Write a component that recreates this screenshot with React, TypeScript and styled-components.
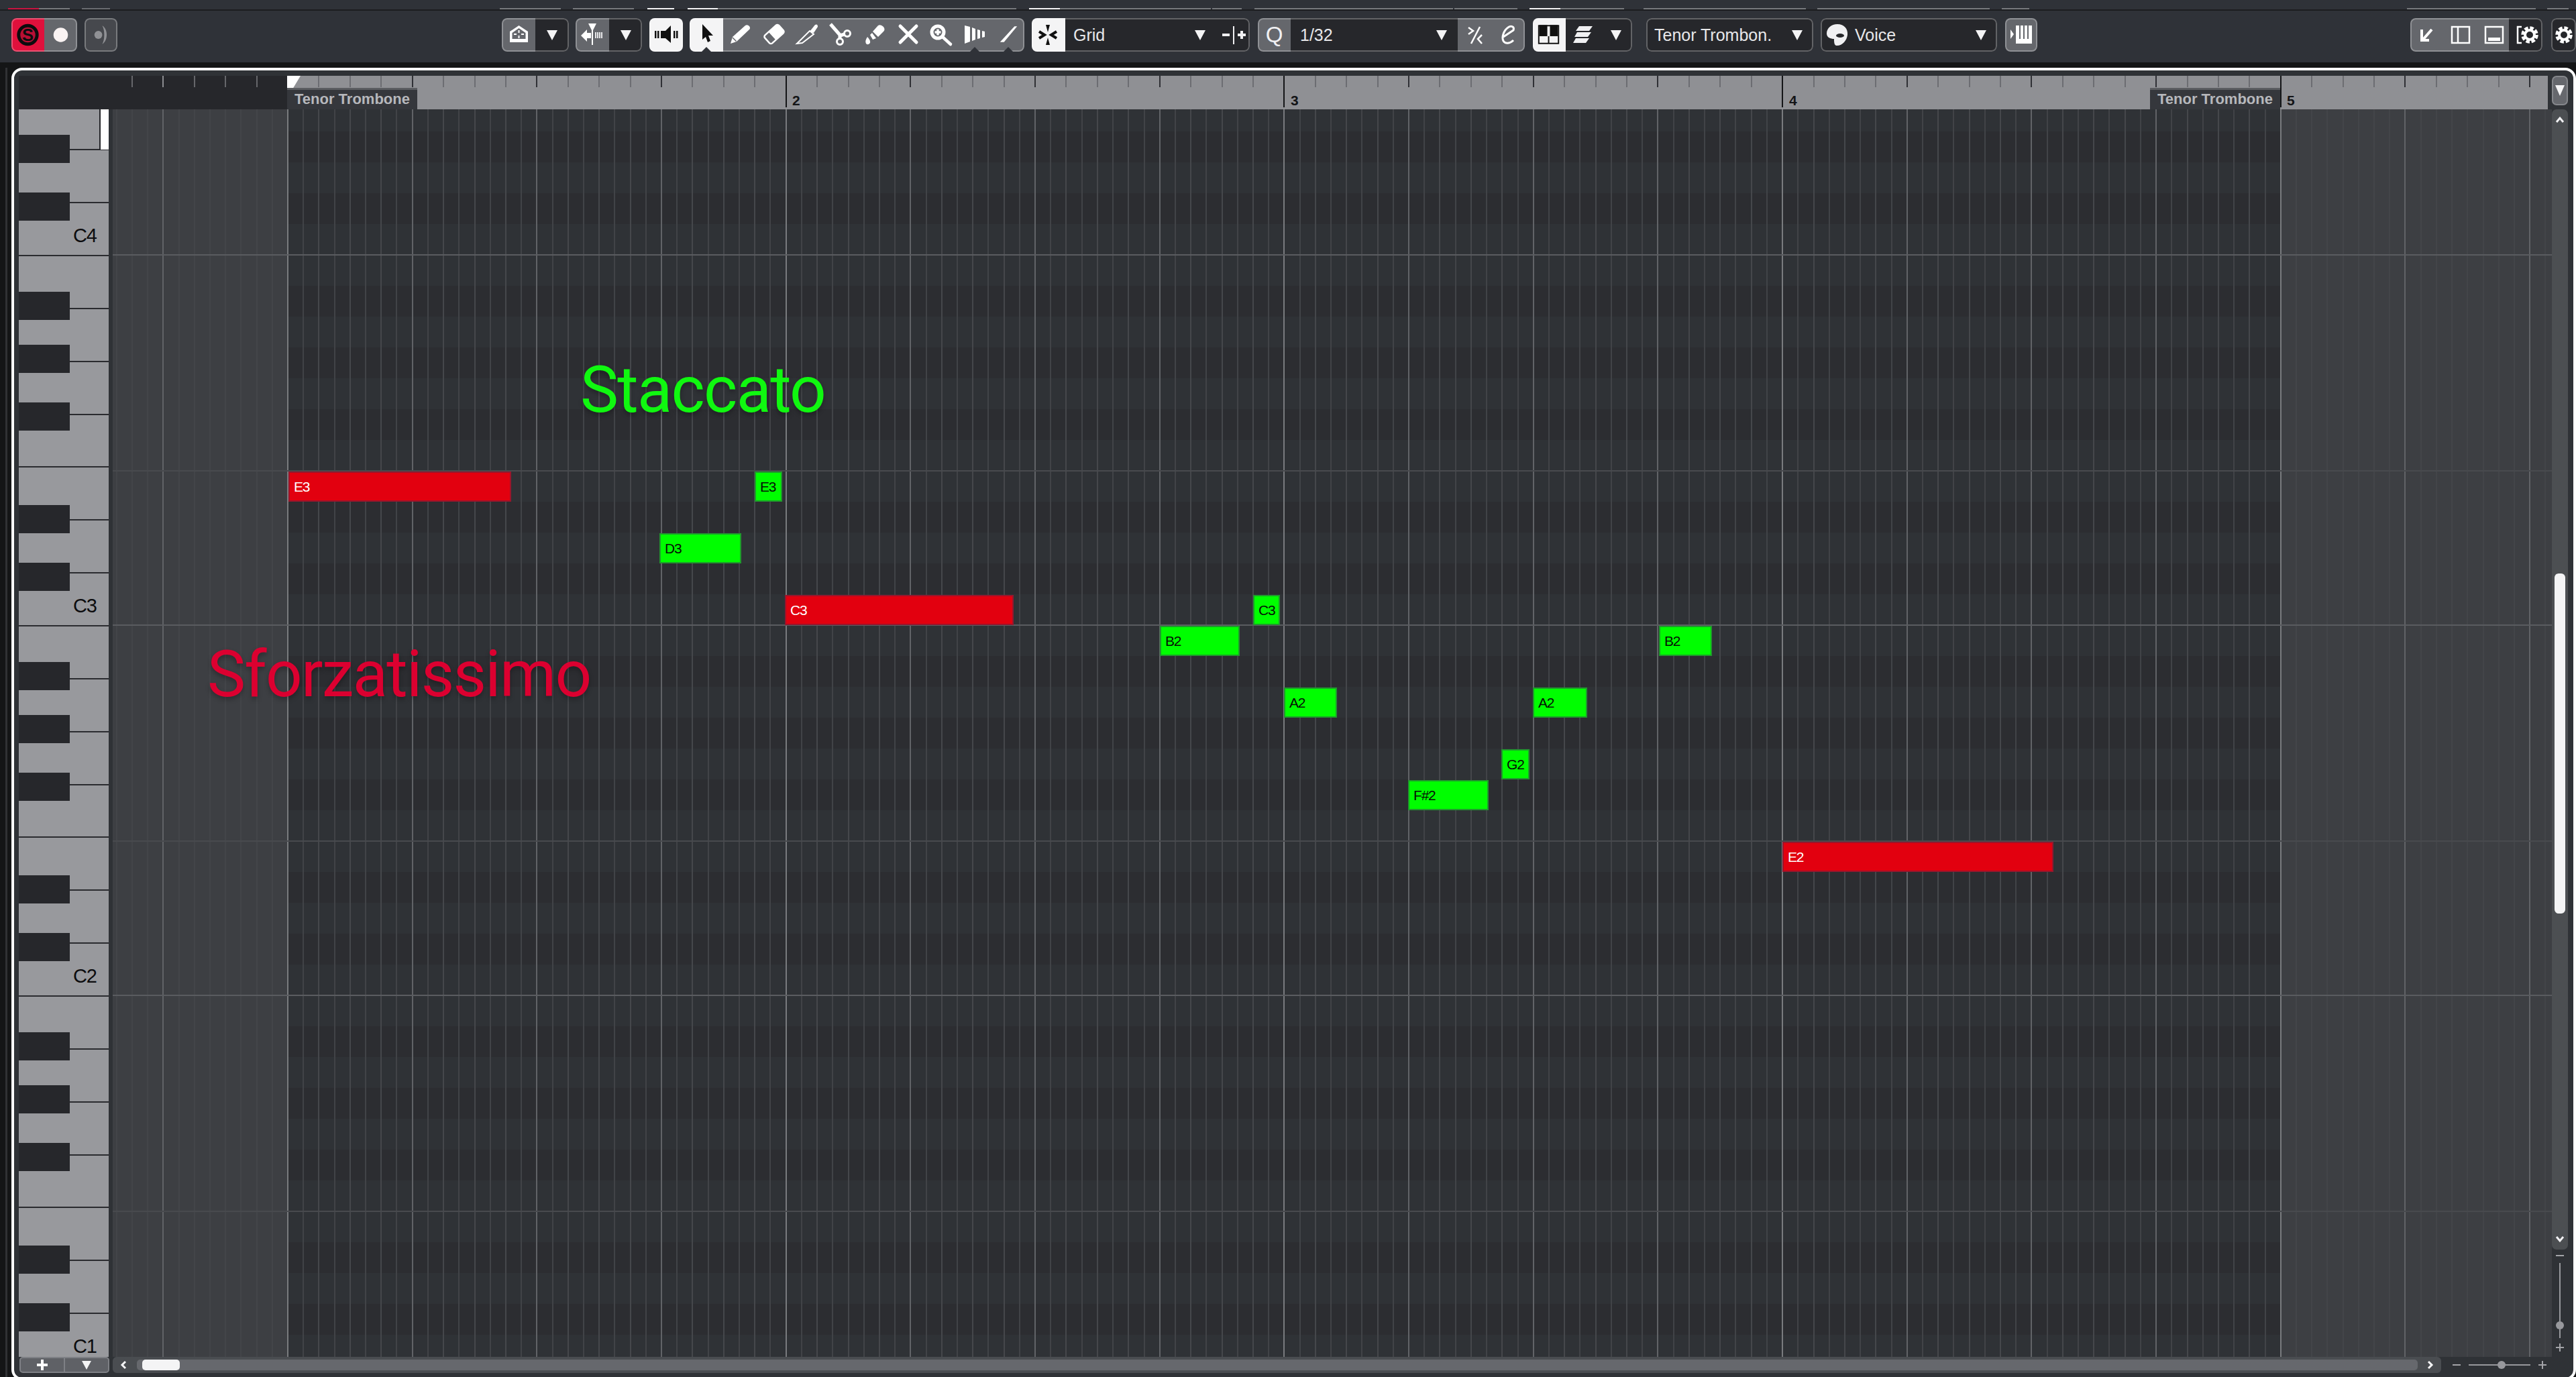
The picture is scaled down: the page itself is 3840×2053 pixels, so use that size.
import React from 'react';
import styled, { createGlobalStyle } from 'styled-components';

const BAR = 742.7;
const ORIGIN = 428;
const LIVE_END = 3399;
const GRID_X = 168;
const GRID_Y = 163;
const GRID_W = 3636;
const GRID_H = 1860;
const ROW = 46;

const pitchTop = (p: number) => 1990 - ROW * p;
const isBlack = (p: number) => [1, 3, 6, 8, 10].includes(p % 12);

const notes = [
  { name: 'E3', p: 28, from: 430, to: 762, accent: true },
  { name: 'E3', p: 28, from: 1125, to: 1166 },
  { name: 'D3', p: 26, from: 983, to: 1105 },
  { name: 'C3', p: 24, from: 1170, to: 1511, accent: true },
  { name: 'B2', p: 23, from: 1729, to: 1848 },
  { name: 'C3', p: 24, from: 1868, to: 1908 },
  { name: 'A2', p: 21, from: 1914, to: 1993 },
  { name: 'F#2', p: 18, from: 2099, to: 2219 },
  { name: 'G2', p: 19, from: 2238, to: 2280 },
  { name: 'A2', p: 21, from: 2285, to: 2366 },
  { name: 'B2', p: 23, from: 2473, to: 2552 },
  { name: 'E2', p: 16, from: 2657, to: 3061, accent: true },
];

const edgeSegments = [
  [12, 58, '#c81440'], [58, 104, '#77797d'], [122, 164, '#6a6c70'], [745, 836, '#77797d'], [854, 945, '#77797d'],
  [965, 1005, '#f4f4f5'], [1025, 1070, '#f4f4f5'], [1070, 1515, '#77797d'], [1534, 1580, '#f4f4f5'], [1580, 1805, '#77797d'],
  [1807, 1851, '#77797d'], [1870, 2166, '#77797d'], [2168, 2262, '#77797d'], [2280, 2326, '#f4f4f5'], [2326, 2421, '#77797d'],
  [2450, 2692, '#77797d'], [2709, 2966, '#77797d'], [2984, 3025, '#77797d'], [3588, 3780, '#77797d'], [3797, 3829, '#77797d'],
];

const GlobalStyle = createGlobalStyle`
  html, body {
    margin: 0;
    background: #141516;
    overflow: hidden;
  }
  * { box-sizing: border-box; }
`;

const Page = styled.div`
  position: relative;
  width: 3840px;
  height: 2053px;
  overflow: hidden;
  background: #141516;
  font-family: 'Liberation Sans', Arial, sans-serif;
  display: flex;
  flex-direction: column;
`;

const TopEdge = styled.div`
  flex: none;
  height: 16px;
  background: #2f3238;
  border-bottom: 2px solid #1c1d20;
  display: flex;
  align-items: flex-end;
`;

const EdgeSeg = styled.i<{ $ml: number; $w: number; $c: string }>`
  display: block;
  height: 2px;
  margin-left: ${p => p.$ml}px;
  width: ${p => p.$w}px;
  background: ${p => p.$c};
`;

const Toolbar = styled.div`
  height: 77px;
  flex: none;
  padding-top: 11px;
  background: #2f3238;
  display: flex;
  align-items: flex-start;
`;

const Group = styled.div<{ $ml: number }>`
  position: relative;
  flex: none;
  display: flex;
  height: 50px;
  margin-left: ${p => p.$ml}px;
  border-radius: 8px;
  overflow: hidden;

  &::after {
    content: '';
    position: absolute;
    inset: 0;
    border: 2px solid rgba(255, 255, 255, 0.28);
    border-radius: 8px;
    pointer-events: none;
  }
`;

const tones: Record<string, string> = {
  grey: '#65676c',
  dark: '#26272b',
  white: '#f4f4f5',
  red: '#e0103c',
  mute: '#46484d',
};

const Cell = styled.div<{ $w: number; $tone: string }>`
  position: relative;
  flex: none;
  width: ${p => p.$w}px;
  height: 50px;
  background: ${p => tones[p.$tone]};
  display: flex;
  align-items: center;
  justify-content: center;

  & + &[data-split] {
    border-left: 2px solid #6a6c70;
  }
`;

const Notch = styled.span`
  position: absolute;
  left: 50%;
  bottom: 0;
  margin-left: -7px;
  width: 0;
  height: 0;
  border-left: 7px solid transparent;
  border-right: 7px solid transparent;
  border-bottom: 7px solid #2f3238;
  z-index: 2;
`;

const SelectCell = styled(Cell)<{ $pl: number }>`
  justify-content: flex-start;
  gap: 10px;
  padding: 0 16px 0 ${p => p.$pl}px;
  color: #e8e8ea;
  font-size: 25px;
`;

const SelectText = styled.span`
  flex: 1;
  white-space: nowrap;
`;

const Caret = styled.span`
  flex: none;
  width: 0;
  height: 0;
  border-left: 8px solid transparent;
  border-right: 8px solid transparent;
  border-top: 15px solid #f4f4f5;
`;

const QLetter = styled.span`
  color: #f0f0f2;
  font-size: 33px;
`;

const Frame = styled.div`
  position: relative;
  flex: none;
  margin-top: 8px;
  margin-left: 17px;
  width: 3823px;
  height: 1957px;
  border: 4px solid #fff;
  border-radius: 16px;
  background: #2f3236;
  padding: 8px 0 0 7px;
  display: grid;
  grid-template-columns: 140px ${GRID_W}px 32px;
  grid-template-rows: 50px ${GRID_H}px 24px;
  align-content: start;

  &::before {
    content: '';
    position: absolute;
    left: -13px;
    top: -4px;
    bottom: -4px;
    width: 3px;
    background: #303134;
  }
`;

const Ruler = styled.div`
  position: relative;
  grid-column: 1 / span 2;
  width: 3770px;
  height: 50px;
  display: flex;
  overflow: hidden;
`;

const RulerDead = styled.div`
  width: ${ORIGIN - 28}px;
  background: #26272b;
`;

const RulerLive = styled.div`
  flex: 1;
  background: #8f9094;
`;

const RulerTicks = styled.svg`
  position: absolute;
  left: 0;
  top: 0;
`;

const BarNumber = styled.span<{ $x: number }>`
  position: absolute;
  left: ${p => p.$x}px;
  top: 25px;
  font-size: 21px;
  line-height: 24px;
  font-weight: 700;
  color: #141517;
`;

const Marker = styled.div<{ $x: number }>`
  position: absolute;
  left: ${p => p.$x}px;
  top: 18px;
  width: 194px;
  height: 32px;
  background: #35373c;
  border-top: 3px solid #5b5d61;
  color: #b7b8bc;
  font-size: 22px;
  font-weight: 700;
  line-height: 27px;
  padding-left: 11px;
  white-space: nowrap;
`;

const CornerButton = styled.div`
  width: 24px;
  height: 44px;
  background: #66686d;
  border: 2px solid #85878b;
  border-radius: 7px;
  display: flex;
  align-items: center;
  justify-content: center;

  ${Caret} {
    border-left-width: 7px;
    border-right-width: 7px;
    border-top-width: 16px;
  }
`;

const KeyColumn = styled.div`
  width: 134px;
  height: ${GRID_H}px;
  position: relative;
  overflow: hidden;
  background: #98999d;
`;

const KeyStack = styled.div`
  margin-top: -335px;
`;

const Octave = styled.div`
  position: relative;
  height: 552px;
  display: flex;
  flex-direction: column;
`;

const WhiteKey = styled.div`
  flex: 1;
  border-top: 2px solid #2a2b2f;
  background: #98999d;
`;

const BlackKey = styled.div<{ $bottom: number }>`
  position: absolute;
  left: 0;
  bottom: ${p => p.$bottom}px;
  width: 76px;
  height: 42px;
  background: #26272b;
`;

const KeyLabel = styled.span`
  position: absolute;
  right: 18px;
  bottom: 14px;
  color: #0c0c0e;
  font-size: 29px;
  line-height: 1;
  letter-spacing: -1px;
`;

const ActiveKey = styled.div`
  position: absolute;
  right: 0;
  top: 0;
  width: 14px;
  height: 60px;
  background: #fff;
  border-left: 2px solid #26272b;
`;

const Roll = styled.div`
  position: relative;
  width: ${GRID_W}px;
  height: ${GRID_H}px;
  overflow: hidden;
  background: #3d3f43;
`;

const RollLines = styled.svg`
  display: block;
`;

const Note = styled.div<{ $x: number; $y: number; $w: number; $accent?: boolean }>`
  position: absolute;
  left: ${p => p.$x}px;
  top: ${p => p.$y}px;
  width: ${p => p.$w}px;
  height: 45px;
  padding-left: 6px;
  background: ${p => (p.$accent ? '#e2000f' : '#00fe00')};
  border: 2px solid ${p => (p.$accent ? '#98162c' : '#1f9a2c')};
  color: ${p => (p.$accent ? '#fff' : '#061006')};
  font-size: 21px;
  line-height: 41px;
  letter-spacing: -1.2px;
  white-space: nowrap;
  overflow: hidden;
`;

const Caption = styled.span<{ $x: number; $y: number; $c: string }>`
  position: absolute;
  left: ${p => p.$x}px;
  top: ${p => p.$y}px;
  color: ${p => p.$c};
  font-family: Roboto, 'Liberation Sans', sans-serif;
  font-weight: 400;
  font-size: 96px;
  line-height: 1;
  letter-spacing: -1.7px;
  text-shadow: 0 4px 7px rgba(0, 0, 0, 0.28);
  white-space: nowrap;
`;

const SideColumn = styled.div`
  width: 24px;
  display: flex;
  flex-direction: column;
  align-items: center;
`;

const VTrack = styled.div`
  position: relative;
  width: 24px;
  height: 1700px;
  background: #4c4f52;
  border-radius: 7px;
`;

const VThumb = styled.div`
  position: absolute;
  left: 4px;
  right: 4px;
  top: 692px;
  height: 507px;
  background: #f4f4f5;
  border-radius: 6px;
`;

const VChevron = styled.svg<{ $top?: number; $bottom?: number }>`
  position: absolute;
  left: 5px;
  ${p => (p.$top !== undefined ? `top: ${p.$top}px;` : `bottom: ${p.$bottom}px;`)}
`;

const VSlider = styled.div`
  flex: 1;
  display: flex;
  flex-direction: column;
  align-items: center;
  padding-top: 8px;
`;

const Minus = styled.i`
  display: block;
  width: 12px;
  height: 2px;
  background: #a3a4a8;
  flex: none;
`;

const PlusMark = styled.svg`
  flex: none;
  display: block;
`;

const VRail = styled.div`
  position: relative;
  width: 2px;
  height: 112px;
  margin: 10px 0 8px;
  background: #97989c;
`;

const VKnob = styled.i`
  position: absolute;
  left: -5px;
  bottom: 13px;
  width: 12px;
  height: 12px;
  border-radius: 50%;
  background: #98999d;
`;

const KeyButtons = styled.div`
  width: 134px;
  height: 24px;
  margin-left: 1px;
  display: flex;
  border: 2px solid #7e8085;
  border-radius: 5px;
  background: #5f6166;
  overflow: hidden;
`;

const KeyButton = styled.div`
  flex: 1;
  display: flex;
  align-items: center;
  justify-content: center;

  & + & {
    border-left: 2px solid #7e8085;
  }

  ${Caret} {
    border-left-width: 7px;
    border-right-width: 7px;
    border-top-width: 13px;
  }
`;

const BottomBar = styled.div`
  display: flex;
  height: 24px;
`;

const HScroll = styled.div`
  width: 3471px;
  height: 24px;
  background: #4a4d51;
  border-radius: 6px;
  display: flex;
  align-items: center;
  justify-content: space-between;
  padding: 0 10px;
`;

const HTrack = styled.div`
  width: 3400px;
  height: 16px;
  background: #66686d;
  border-radius: 5px;
  padding-left: 8px;
`;

const HThumb = styled.div`
  width: 56px;
  height: 16px;
  border-radius: 5px;
  background: #f4f4f5;
`;

const HZoom = styled.div`
  flex: 1;
  display: flex;
  align-items: center;
  padding: 0 4px 0 17px;
  gap: 12px;
`;

const HRail = styled.div`
  position: relative;
  width: 92px;
  height: 2px;
  background: #97989c;
  flex: none;
`;

const HKnob = styled.i`
  position: absolute;
  left: 43px;
  top: -5px;
  width: 12px;
  height: 12px;
  border-radius: 50%;
  background: #98999d;
`;

const Icon: React.FC<{ size?: number; w?: number; children: React.ReactNode }> = ({ size = 50, w, children }) => (
  <svg width={w ?? size} height={size} viewBox={`0 0 ${w ?? size} ${size}`}>
    {children}
  </svg>
);

const Gear: React.FC<{ cx: number; cy: number; fill: string; bg: string }> = ({ cx, cy, fill, bg }) => (
  <g>
    <circle cx={cx} cy={cy} r={10.5} fill="none" stroke={fill} strokeWidth={4.5} strokeDasharray="5.5 2.75" />
    <circle cx={cx} cy={cy} r={7} fill={bg} stroke={fill} strokeWidth={4} />
  </g>
);

const Chevron: React.FC<{ dir: 'left' | 'right' }> = ({ dir }) => (
  <svg width="12" height="14" viewBox="0 0 12 14">
    <path d={dir === 'left' ? 'M9 2 L4 7 L9 12' : 'M3 2 L8 7 L3 12'} fill="none" stroke="#f4f4f5" strokeWidth="3" />
  </svg>
);

const Plus: React.FC = () => (
  <PlusMark width="12" height="12" viewBox="0 0 12 12">
    <path d="M0 6 H12 M6 0 V12" stroke="#a3a4a8" strokeWidth="2" />
  </PlusMark>
);

const RollGrid: React.FC = () => {
  const step = BAR / 32;
  const lines: React.ReactNode[] = [];
  for (let i = -11; i < 162; i++) {
    const x = ORIGIN + i * step - GRID_X;
    if (x < 0 || x > GRID_W) continue;
    const live = x + GRID_X >= ORIGIN - 1 && x + GRID_X < LIVE_END + 1;
    let color = live ? '#414347' : '#434549';
    if (i % 2 === 0 && live) color = '#45474b';
    if (i % 8 === 0) color = '#616367';
    if (i % 32 === 0 && live) color = '#797b7e';
    lines.push(<rect key={i} x={Math.round(x)} y={0} width={2} height={GRID_H} fill={color} />);
  }
  const rows: React.ReactNode[] = [];
  const rules: React.ReactNode[] = [];
  for (let p = -1; p < 41; p++) {
    const y = pitchTop(p) - GRID_Y;
    rows.push(
      <rect key={p} x={ORIGIN - GRID_X} y={y} width={LIVE_END - ORIGIN} height={ROW} fill={isBlack(p) ? '#2c2d31' : '#2f3236'} />,
    );
    if (p % 12 === 0) rules.push(<rect key={`c${p}`} x={0} y={y + ROW - 1} width={GRID_W} height={2} fill="#5a5c60" />);
    if (p % 12 === 4) rules.push(<rect key={`f${p}`} x={0} y={y - 1} width={GRID_W} height={2} fill="#484a4e" />);
  }
  return (
    <RollLines width={GRID_W} height={GRID_H} shapeRendering="crispEdges">
      {rows}
      {lines}
      {rules}
    </RollLines>
  );
};

const RulerMarks: React.FC = () => {
  const step = BAR / 16;
  const marks: React.ReactNode[] = [];
  for (let i = -5; i < 76; i++) {
    const x = Math.round(ORIGIN + i * step - 28);
    if (x > 3770) continue;
    const dead = i < 0;
    const beat = i % 4 === 0;
    const bar = i % 16 === 0 && i >= 0 && x < LIVE_END - 27;
    let color = beat ? '#2f3035' : '#6c6d72';
    if (dead) color = beat ? '#8b8c90' : '#66676b';
    if (bar) color = '#141517';
    marks.push(<rect key={i} x={x} y={0} width={2} height={bar ? 47 : 17} fill={color} />);
  }
  return (
    <RulerTicks width={3770} height={50} shapeRendering="crispEdges">
      {marks}
      <polygon points="400,0 420,0 402,30 402,47 400,47" fill="#fff" shapeRendering="auto" />
    </RulerTicks>
  );
};

const Keyboard: React.FC = () => (
  <KeyColumn>
    <KeyStack>
      {['C4', 'C3', 'C2', 'C1'].map(label => (
        <Octave key={label}>
          {[0, 1, 2, 3, 4, 5, 6].map(k => (
            <WhiteKey key={k} />
          ))}
          {[455, 376, 290, 137, 51].map(b => (
            <BlackKey key={b} $bottom={b} />
          ))}
          <KeyLabel>{label}</KeyLabel>
        </Octave>
      ))}
    </KeyStack>
    <ActiveKey />
  </KeyColumn>
);

const TopToolbar: React.FC = () => (
  <Toolbar>
    <Group $ml={17}>
      <Cell $w={49} $tone="red">
        <Icon>
          <circle cx={25} cy={25} r={14} fill="#b80f34" stroke="#0c0c0e" strokeWidth={5} />
          <text x={25} y={34} textAnchor="middle" fontFamily="Liberation Sans" fontWeight="700" fontSize="26" fill="#0c0c0e">
            S
          </text>
        </Icon>
      </Cell>
      <Cell $w={49} $tone="grey">
        <Icon>
          <circle cx={25} cy={25} r={11} fill="#faf3f3" />
        </Icon>
      </Cell>
    </Group>
    <Group $ml={11}>
      <Cell $w={49} $tone="mute">
        <Icon>
          <circle cx={21} cy={25} r={6} fill="#909195" />
          <path d="M27 11 C36 16 36 34 27 39 C31 33 31 17 27 11Z" fill="#909195" />
        </Icon>
      </Cell>
    </Group>
    <Group $ml={573}>
      <Cell $w={50} $tone="grey">
        <Icon>
          <path d="M25.5 11 L39 20 V36 H12 V20Z" fill="#fff" />
          <path d="M25.5 15 L35.5 22 V31 H15.5 V22Z" fill="#65676c" />
          <path d="M24.5 18 h2 v4 h-2z M24.5 26 h2 v4 h-2z M18 23 h4 v2 h-4z M29 23 h4 v2 h-4z" fill="#fff" />
        </Icon>
      </Cell>
      <Cell $w={50} $tone="dark">
        <Caret />
      </Cell>
    </Group>
    <Group $ml={10}>
      <Cell $w={50} $tone="grey">
        <Icon>
          <path d="M24 8 h2 V40 h-2z M19 8 H31 L25 20Z M8 26 L17 17 V22 H23 V30 H17 V35Z" fill="#fff" />
          <path d="M29 21 h2 v9 h-2z M32 21 h2 v9 h-2z M35 21 h2 v9 h-2z M38 21 h2 v9 h-2z" fill="#e6e6e8" />
        </Icon>
      </Cell>
      <Cell $w={49} $tone="dark">
        <Caret />
      </Cell>
    </Group>
    <Group $ml={11}>
      <Cell $w={50} $tone="white">
        <Icon>
          <path d="M8 19 h2.5 v11 h-2.5z M12 19 h2.5 v11 h-2.5z M36 19 h2.5 v11 h-2.5z M40 19 h2.5 v11 h-2.5z" fill="#111" />
          <path d="M17 19 H24 L32 11 V37 L24 30 H17Z" fill="#111" />
        </Icon>
      </Cell>
    </Group>
    <Group $ml={10}>
      <Cell $w={50} $tone="white">
        <Icon>
          <path d="M19 9 L35 26 L28 26 L31 34 L27 36 L24 28 L19 32Z" fill="#111" />
        </Icon>
        <Notch />
      </Cell>
      <Cell $w={50} $tone="grey">
        <Icon>
          <path d="M11 38 L14 28 L33 11 Q36 9 39 12 Q41 15 39 17 L20 35Z" fill="#fff" />
          <path d="M14 29 L19.5 34.5" stroke="#65676c" strokeWidth="1.5" />
        </Icon>
      </Cell>
      <Cell $w={50} $tone="grey">
        <Icon>
          <g transform="rotate(-42 26 24)">
            <rect x={12} y={16} width={28} height={16} rx={3} fill="none" stroke="#fff" strokeWidth={2.5} />
            <path d="M22 16 H37 Q40 16 40 19 V29 Q40 32 37 32 H22Z" fill="#fff" />
          </g>
        </Icon>
      </Cell>
      <Cell $w={50} $tone="grey">
        <Icon>
          <path d="M29 20 L37 10 Q41 8 41 13 L35 22Z" fill="#fff" />
          <path d="M29 19 L35 24 L18 37 L10 38Z" fill="none" stroke="#fff" strokeWidth={2} />
        </Icon>
      </Cell>
      <Cell $w={50} $tone="grey">
        <Icon>
          <path d="M10 9 L24 25 V30 M24 26 L31 24" fill="none" stroke="#fff" strokeWidth={5} />
          <circle cx={24} cy={35} r={4.5} fill="none" stroke="#fff" strokeWidth={3} />
          <circle cx={35} cy={23} r={4.5} fill="none" stroke="#fff" strokeWidth={3} />
        </Icon>
      </Cell>
      <Cell $w={50} $tone="grey">
        <Icon>
          <path d="M23 20 L31 11 Q35 9 39 13 Q42 17 39 20 L31 28Z" fill="#fff" />
          <path d="M19 25 L22 22 L28 30 L23 32Z" fill="#fff" />
          <path d="M15 28 Q11 34 13 38 Q16 41 19 37 Q20 33 15 28Z" fill="#fff" />
        </Icon>
      </Cell>
      <Cell $w={50} $tone="grey">
        <Icon>
          <path d="M14 12 L38 36 M38 12 L14 36" stroke="#fff" strokeWidth={5} strokeLinecap="round" />
        </Icon>
      </Cell>
      <Cell $w={50} $tone="grey">
        <Icon>
          <circle cx={20} cy={21} r={9} fill="none" stroke="#fff" strokeWidth={5} />
          <path d="M15.5 21 H24.5 M20 16.5 V25.5" stroke="#fff" strokeWidth={3.5} />
          <path d="M27 28 L39 39" stroke="#fff" strokeWidth={4.5} strokeLinecap="round" />
        </Icon>
      </Cell>
      <Cell $w={50} $tone="grey">
        <Icon>
          <path d="M10 11 L18 13 V35 L10 38Z M21 14 L26 16 V32 L21 34Z M29 17 L33 18 V30 L29 31Z M36 19 L40 20 V28 L36 29Z" fill="#fff" />
        </Icon>
        <Notch />
      </Cell>
      <Cell $w={49} $tone="grey">
        <Icon>
          <path d="M13 36 L35 12 H39 L19 36Z" fill="#fff" />
        </Icon>
        <Notch />
      </Cell>
    </Group>
    <Group $ml={11}>
      <Cell $w={50} $tone="white">
        <Icon>
          <path d="M21 10 H27 L24 21Z M21 40 H27 L24 29Z" fill="#111" />
          <path d="M11 20 L19 25 L11 30 M37 20 L29 25 L37 30" fill="none" stroke="#111" strokeWidth={4} />
        </Icon>
      </Cell>
      <SelectCell $w={225} $tone="dark" $pl={12}>
        <SelectText>Grid</SelectText>
        <Caret />
      </SelectCell>
      <Cell $w={50} $tone="dark" data-split>
        <Icon w={48}>
          <path d="M8 23 h11 v4 h-11z M24 12 h2 v27 h-2z M31 23 h12 v4 h-12z M35 19 h4 v12 h-4z" fill="#f0f0f2" />
        </Icon>
      </Cell>
    </Group>
    <Group $ml={12}>
      <Cell $w={49} $tone="grey">
        <QLetter>Q</QLetter>
      </Cell>
      <SelectCell $w={249} $tone="dark" $pl={14}>
        <SelectText>1/32</SelectText>
        <Caret />
      </SelectCell>
      <Cell $w={50} $tone="grey">
        <Icon>
          <path d="M33 13 L20 38" stroke="#fff" strokeWidth={2.5} />
          <path d="M16 14 L23 19 L16 24 M36 25 L30 31 L36 38" fill="none" stroke="#fff" strokeWidth={2.5} />
        </Icon>
      </Cell>
      <Cell $w={50} $tone="grey">
        <Icon>
          <path d="M18 28 L33 18 C35 12 29 11 25 14 C19 18 15 28 18 34 C21 39 28 38 33 33" fill="none" stroke="#fff" strokeWidth={3} />
        </Icon>
      </Cell>
    </Group>
    <Group $ml={12}>
      <Cell $w={49} $tone="white">
        <Icon>
          <rect x={9} y={11} width={30} height={27} fill="none" stroke="#111" strokeWidth={2} />
          <rect x={10} y={10} width={12} height={17} fill="#111" />
          <rect x={26} y={10} width={12} height={17} fill="#111" />
          <rect x={23} y={27} width={2} height={11} fill="#111" />
        </Icon>
      </Cell>
      <Cell $w={50} $tone="dark">
        <Icon>
          <path d="M20 12 H40 L35 19 H15Z M17 21 H38 L33 28 H13Z M15 30 H35 L30 37 H11Z" fill="#f0f0f2" />
        </Icon>
      </Cell>
      <Cell $w={49} $tone="dark">
        <Caret />
      </Cell>
    </Group>
    <Group $ml={21}>
      <SelectCell $w={249} $tone="dark" $pl={12}>
        <SelectText>Tenor Trombon.</SelectText>
        <Caret />
      </SelectCell>
    </Group>
    <Group $ml={11}>
      <SelectCell $w={263} $tone="dark" $pl={9}>
        <Icon size={32}>
          <path d="M16 0 C26 0 32 7 31 16 C30 24 24 32 15 32 C11 32 11 26 11 22 C6 22 0 20 0 14 C0 6 7 0 16 0Z" fill="#f0f0f2" />
          <ellipse cx={20} cy={17} rx={6} ry={3} fill="#26272b" />
        </Icon>
        <SelectText>Voice</SelectText>
        <Caret />
      </SelectCell>
    </Group>
    <Group $ml={12}>
      <Cell $w={48} $tone="grey">
        <Icon w={48}>
          <path d="M8 17 L13 24 L8 31Z" fill="#fff" />
          <path d="M16 11 h5 v27 h-5z M23 11 h4 v27 h-4z M29 11 h4 v27 h-4z M35 11 h5 v27 h-5z M16 31 h24 v7 h-24z" fill="#fff" />
        </Icon>
      </Cell>
    </Group>
    <Group $ml={556}>
      <Cell $w={49} $tone="grey">
        <Icon w={49}>
          <path d="M17 17 V33 H28" fill="none" stroke="#fff" strokeWidth={4} />
          <path d="M18 33 L32 17" stroke="#fff" strokeWidth={4} />
        </Icon>
      </Cell>
      <Cell $w={49} $tone="grey">
        <Icon w={49}>
          <rect x={13} y={13} width={26} height={24} fill="none" stroke="#fff" strokeWidth={2.5} />
          <path d="M22 13 V37" stroke="#fff" strokeWidth={2.5} />
        </Icon>
      </Cell>
      <Cell $w={49} $tone="grey">
        <Icon w={49}>
          <rect x={14} y={13} width={26} height={24} fill="none" stroke="#fff" strokeWidth={2.5} />
          <rect x={18} y={29} width={18} height={5} fill="#fff" />
        </Icon>
      </Cell>
      <Cell $w={50} $tone="dark">
        <Icon>
          <path d="M19 13 H13 V37 H19" fill="none" stroke="#fff" strokeWidth={2.5} />
          <Gear cx={31} cy={25} fill="#fff" bg="#26272b" />
        </Icon>
      </Cell>
    </Group>
    <Group $ml={13}>
      <Cell $w={37} $tone="dark">
        <Icon w={37}>
          <Gear cx={19} cy={25} fill="#fff" bg="#26272b" />
        </Icon>
      </Cell>
    </Group>
  </Toolbar>
);

const App: React.FC = () => (
  <Page>
    <GlobalStyle />
    <TopEdge>
      {edgeSegments.map(([from, to, color], i) => (
        <EdgeSeg
          key={i}
          $ml={(from as number) - (i > 0 ? (edgeSegments[i - 1][1] as number) : 0)}
          $w={(to as number) - (from as number)}
          $c={color as string}
        />
      ))}
    </TopEdge>
    <TopToolbar />
    <Frame>
      <Ruler>
        <RulerDead />
        <RulerLive />
        <RulerMarks />
        <Marker $x={400}>Tenor Trombone</Marker>
        <Marker $x={3177}>Tenor Trombone</Marker>
        <BarNumber $x={1153}>2</BarNumber>
        <BarNumber $x={1896}>3</BarNumber>
        <BarNumber $x={2639}>4</BarNumber>
        <BarNumber $x={3381}>5</BarNumber>
      </Ruler>
      <CornerButton>
        <Caret />
      </CornerButton>
      <Keyboard />
      <Roll>
        <RollGrid />
        <Caption $x={697} $y={370} $c="#10f810">
          Staccato
        </Caption>
        <Caption $x={141} $y={794} $c="#dc0030">
          Sforzatissimo
        </Caption>
        {notes.map(n => (
          <Note
            key={`${n.name}-${n.from}`}
            $x={n.from - GRID_X}
            $y={pitchTop(n.p) - GRID_Y + 1}
            $w={n.to - n.from}
            $accent={n.accent}
          >
            {n.name}
          </Note>
        ))}
      </Roll>
      <SideColumn>
        <VTrack>
          <VChevron $top={10} width="14" height="12" viewBox="0 0 14 12">
            <path d="M2 9 L7 3 L12 9" fill="none" stroke="#f0f0f2" strokeWidth="3" />
          </VChevron>
          <VThumb />
          <VChevron $bottom={10} width="14" height="12" viewBox="0 0 14 12">
            <path d="M2 3 L7 9 L12 3" fill="none" stroke="#f0f0f2" strokeWidth="3" />
          </VChevron>
        </VTrack>
        <VSlider>
          <Minus />
          <VRail>
            <VKnob />
          </VRail>
          <Plus />
        </VSlider>
      </SideColumn>
      <KeyButtons>
        <KeyButton>
          <svg width="16" height="16" viewBox="0 0 16 16">
            <path d="M0 8 H16 M8 0 V16" stroke="#fff" strokeWidth="4" />
          </svg>
        </KeyButton>
        <KeyButton>
          <Caret />
        </KeyButton>
      </KeyButtons>
      <BottomBar>
        <HScroll>
          <Chevron dir="left" />
          <HTrack>
            <HThumb />
          </HTrack>
          <Chevron dir="right" />
        </HScroll>
        <HZoom>
          <Minus />
          <HRail>
            <HKnob />
          </HRail>
          <Plus />
        </HZoom>
      </BottomBar>
    </Frame>
  </Page>
);

export default App;
